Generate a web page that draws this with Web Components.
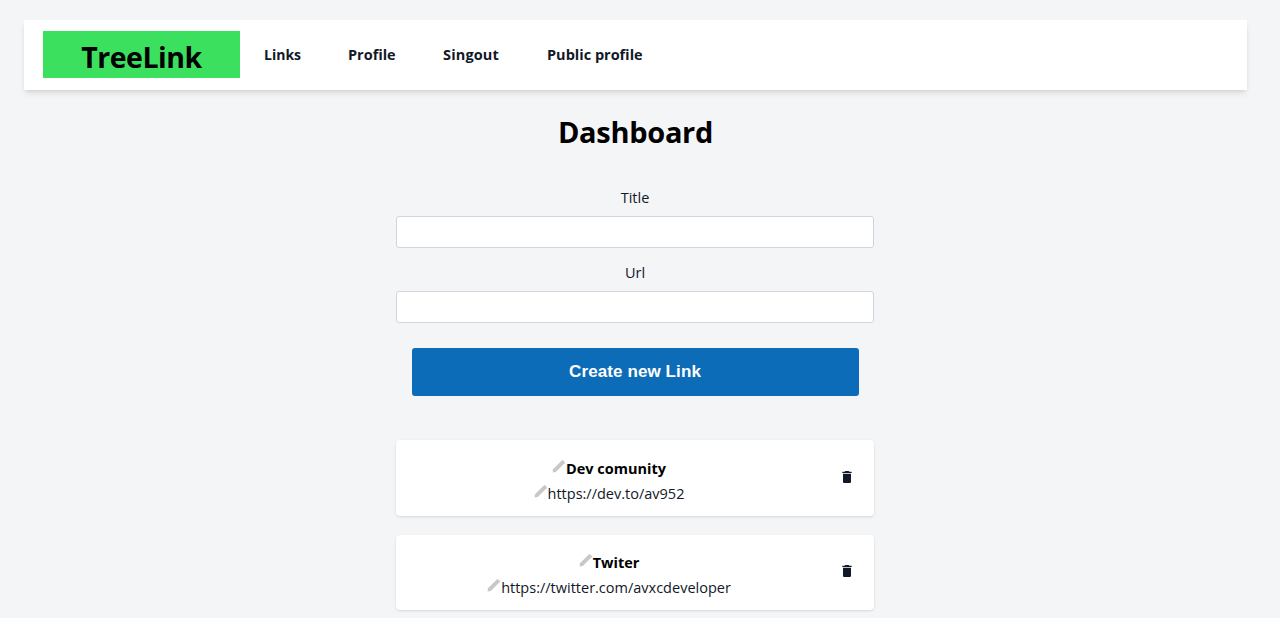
<!DOCTYPE html>
<html lang="en">
<head>
<meta charset="utf-8">
<title>TreeLink</title>
<style>
  html, body { margin: 0; background: #f4f5f7; overflow: hidden; }
  body { font-family: "Open Sans", "Noto Sans", sans-serif; color: #111827; }
</style>
</head>
<body>
<app-page>
  <app-nav slot="nav"></app-nav>
  <link-form></link-form>
  <link-card name="Dev comunity" url="https://dev.to/av952"></link-card>
  <link-card name="Twiter" url="https://twitter.com/avxcdeveloper"></link-card>
</app-page>

<script>
class AppPage extends HTMLElement {
  constructor() {
    super();
    this.attachShadow({ mode: "open" });
  }

  connectedCallback() {
    this.shadowRoot.innerHTML = `
      <style>
        :host { display: block; padding: 20px 33px 0 24px; }
        h1 {
          margin: 23px 0 0;
          font-size: 29px;
          line-height: 38px;
          font-weight: 700;
          letter-spacing: -0.3px;
          text-align: center;
          color: #000;
        }
        .column {
          width: 478px;
          margin-left: 372px;
          display: flex;
          flex-direction: column;
        }
      </style>
      <slot name="nav"></slot>
      <h1>Dashboard</h1>
      <div class="column"><slot></slot></div>
    `;
  }
}

class AppNav extends HTMLElement {
  constructor() {
    super();
    this.attachShadow({ mode: "open" });
  }

  connectedCallback() {
    this.shadowRoot.innerHTML = `
      <style>
        :host {
          display: flex;
          align-items: center;
          height: 70px;
          padding-left: 19px;
          background: #fff;
          box-shadow: 0 4px 6px -1px rgba(0,0,0,.1), 0 2px 4px -2px rgba(0,0,0,.1);
        }
        .logo {
          width: 197px;
          height: 47px;
          margin-top: -1px;
          background: #3ce05f;
          color: #000;
          font-size: 28.5px;
          font-weight: 700;
          letter-spacing: -0.5px;
          line-height: 52px;
          text-align: center;
        }
        nav { display: flex; gap: 48px; margin: -2px 0 0 24px; }
        a { color: #111827; font-size: 14.5px; font-weight: 700; text-decoration: none; white-space: nowrap; }
        a:nth-child(1) { width: 36px; font-size: 14px; }
        a:nth-child(2) { width: 47px; }
        a:nth-child(3) { width: 56px; letter-spacing: 0.15px; }
        a:nth-child(4) { width: 96px; }
      </style>
      <div class="logo">TreeLink</div>
      <nav>
        <a href="#">Links</a>
        <a href="#">Profile</a>
        <a href="#">Singout</a>
        <a href="#">Public profile</a>
      </nav>
    `;
  }
}

class LinkForm extends HTMLElement {
  constructor() {
    super();
    this.attachShadow({ mode: "open" });
  }

  connectedCallback() {
    this.shadowRoot.innerHTML = `
      <style>
        :host { display: block; margin: 36px 0 44px; }
        label { display: block; height: 20px; text-align: center; font-size: 14.5px; line-height: 22px; margin-bottom: 9px; }
        input {
          display: block;
          box-sizing: border-box;
          width: 100%;
          height: 32px;
          margin-bottom: 14px;
          border: 1px solid #d1d5db;
          border-radius: 3px;
          background: #fff;
        }
        button {
          display: block;
          width: 447px;
          height: 48px;
          margin: 25px auto 0;
          border: 0;
          border-radius: 3px;
          background: #0c6cb8;
          color: #fff;
          font: 700 17px "Liberation Sans", Arial, sans-serif;
          letter-spacing: 0.1px;
        }
      </style>
      <label for="title">Title</label>
      <input id="title" type="text">
      <label for="url">Url</label>
      <input id="url" type="text">
      <button type="button">Create new Link</button>
    `;
  }
}

const PENCIL = `<svg viewBox="0 0 14 14" width="14" height="14"><path fill="#c8c8c8" d="M1 10.2 9.8 1.4a1 1 0 0 1 1.4 0l1.4 1.4a1 1 0 0 1 0 1.4L3.8 13 .6 13.4z"/></svg>`;
const TRASH = `<svg viewBox="0 0 24 24" width="16" height="16"><path fill="#111827" d="M6 19c0 1.1.9 2 2 2h8c1.1 0 2-.9 2-2V7H6v12zM19 4h-3.5l-1-1h-5l-1 1H5v2h14V4z"/></svg>`;

class LinkCard extends HTMLElement {
  constructor() {
    super();
    this.attachShadow({ mode: "open" });
  }

  connectedCallback() {
    this.shadowRoot.innerHTML = `
      <style>
        :host {
          display: flex;
          align-items: center;
          box-sizing: border-box;
          height: 75.5px;
          margin-bottom: 19px;
          background: #fff;
          border-radius: 4px;
          box-shadow: 0 1px 3px 0 rgba(0,0,0,.1), 0 1px 2px -1px rgba(0,0,0,.1);
        }
        .text { flex: 1; padding: 6px 0 0 2px; text-align: center; font-size: 14.5px; line-height: 25px; }
        .row { display: flex; justify-content: center; align-items: center; }
        .row svg { margin-top: -5px; }
        .name { font-weight: 700; color: #000; }
        .trash { width: 54px; margin-top: -2px; display: flex; justify-content: center; }
      </style>
      <div class="text">
        <div class="row name">${PENCIL}<span>${this.getAttribute("name")}</span></div>
        <div class="row">${PENCIL}<span>${this.getAttribute("url")}</span></div>
      </div>
      <div class="trash">${TRASH}</div>
    `;
  }
}

customElements.define("app-page", AppPage);
customElements.define("app-nav", AppNav);
customElements.define("link-form", LinkForm);
customElements.define("link-card", LinkCard);
</script>
</body>
</html>
